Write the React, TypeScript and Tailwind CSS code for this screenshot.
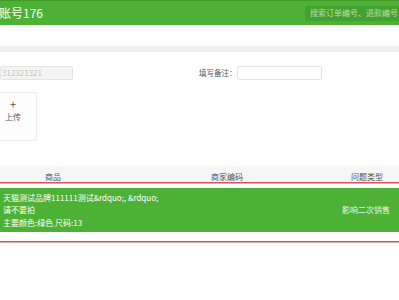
import React from 'react';

const font = { fontFamily: '"Noto Sans CJK SC", "Liberation Sans", sans-serif' };

export default function App() {
  return (
    <div className="w-[399px] h-[300px] overflow-hidden bg-white text-[#555]" style={font}>
      {/* header */}
      <div className="h-[25px] bg-[#4cb135] border-t border-[#3f9a2b] flex items-center justify-between">
        <div className="text-white text-[12px] leading-none -ml-[1px]">账号176</div>
        <div className="w-[94px] h-[15px] bg-[#43a22f] rounded-l-[2px] flex items-center pl-[5px] overflow-hidden whitespace-nowrap">
          <span className="text-[8px] text-[#b9dcae] leading-none">搜索订单编号、退款编号、退</span>
        </div>
      </div>

      <div className="h-[21px] bg-white" />
      <div className="h-[6px] bg-[#efefef]" />

      {/* form */}
      <div className="flex items-center pt-[14px]">
        <div className="w-[73px] h-[14px] bg-[#f4f4f4] border border-[#e4e4e4] rounded-[2px] flex items-center pl-[1px]">
          <span className="text-[8px] text-[#c4c4c4] leading-none">312321321</span>
        </div>
        <div className="ml-[126px] text-[7.5px] text-[#555] leading-none">填写备注：</div>
        <div className="ml-0 w-[85px] h-[14px] border border-[#e3e3e3] rounded-[2px] bg-white" />
      </div>

      <div className="pt-[12px]">
        <div className="-ml-[11px] w-[48px] h-[49px] border border-[#ececec] rounded-[2px] bg-[#fdfdfd] flex flex-col items-center pt-[6px]">
          <span className="text-[11px] text-[#555] leading-none">+</span>
          <span className="text-[8px] text-[#555] leading-none mt-[3px]">上传</span>
        </div>
      </div>

      {/* table */}
      <div className="mt-[25px]">
        <div className="h-[16px] bg-[#f6f6f6] flex items-end pb-[1px] text-[8px] text-[#555] leading-none">
          <span className="ml-[45px]">商品</span>
          <span className="ml-[150px]">商家编码</span>
          <span className="ml-auto mr-[16px]">问题类型</span>
        </div>
        <div className="h-[2px] bg-[#d9534f] border-b border-[#e9a9a6]" />
        <div className="h-[4px] bg-white" />
        <div className="h-[44px] bg-[#4cb135] flex items-center text-white text-[8px] leading-none">
          <div className="flex flex-col gap-[4px] pl-[3px]">
            <span>天猫测试品牌111111测试&amp;rdquo;, &amp;rdquo;</span>
            <span>请不要拍</span>
            <span className="mt-[1px]">主要颜色:绿色 尺码:13</span>
          </div>
          <span className="ml-auto mr-[9px] text-[#e6f4e1]">影响二次销售</span>
        </div>
        <div className="h-[9px] bg-white" />
        <div className="h-[2px] bg-[#d9534f] border-b border-[#e9a9a6]" />
      </div>
    </div>
  );
}
